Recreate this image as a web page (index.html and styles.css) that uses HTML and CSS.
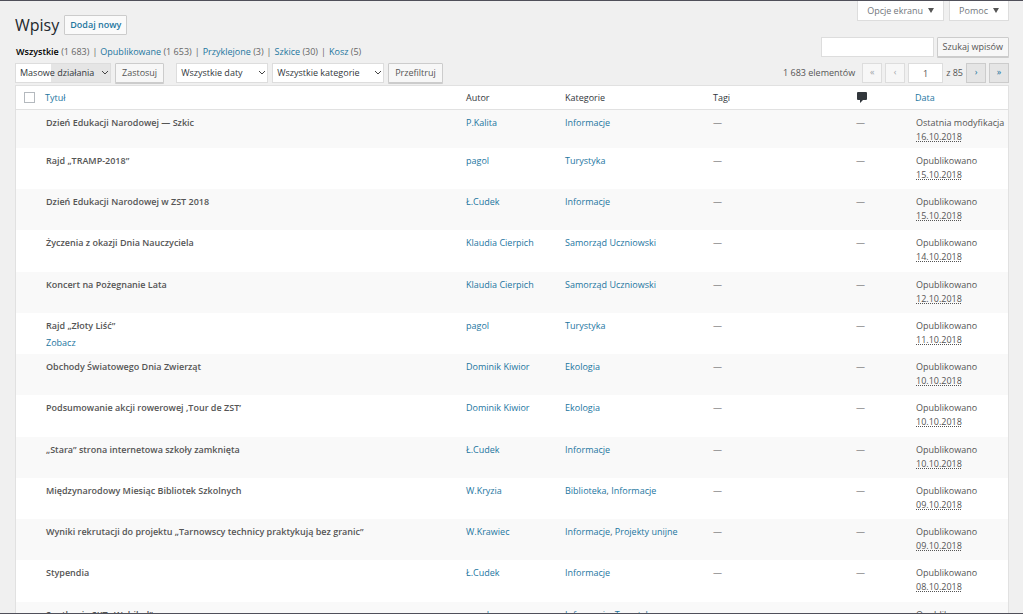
FILE: index.html
```html
<!DOCTYPE html>
<html lang="pl">
<head>
<meta charset="utf-8">
<meta name="viewport" content="width=device-width, initial-scale=1">
<title>Wpisy</title>
<link rel="stylesheet" href="styles.css">
</head>
<body>
<div class="screen">
  <header class="top">
    <h1 class="title">Wpisy</h1>
    <a class="add-new" href="#">Dodaj nowy</a>
    <div class="screen-tabs">
      <button class="screen-tab" type="button">Opcje ekranu <svg class="arrow" viewBox="0 0 6 5"><path d="M0 0h6L3 5z"/></svg></button>
      <button class="screen-tab" type="button">Pomoc <svg class="arrow" viewBox="0 0 6 5"><path d="M0 0h6L3 5z"/></svg></button>
    </div>
  </header>
  <div class="subhead">
    <ul class="views">
      <li><a class="current" href="#">Wszystkie</a> (1 683)</li>
      <li><a href="#">Opublikowane</a> (1 653)</li>
      <li><a href="#">Przyklejone</a> (3)</li>
      <li><a href="#">Szkice</a> (30)</li>
      <li><a href="#">Kosz</a> (5)</li>
    </ul>
    <form class="search">
      <input class="field search-field" type="search" aria-label="Szukaj wpisów">
      <button class="button search-button" type="button">Szukaj wpisów</button>
    </form>
  </div>
  <div class="tablenav">
    <div class="select select-bulk">
      <select aria-label="Masowe działania"><option>Masowe działania</option></select>
      <svg class="chevron" viewBox="0 0 8 6"><path d="M1 1l3 3 3-3"/></svg>
    </div>
    <button class="button apply" type="button">Zastosuj</button>
    <div class="select select-date">
      <select aria-label="Data"><option>Wszystkie daty</option></select>
      <svg class="chevron" viewBox="0 0 8 6"><path d="M1 1l3 3 3-3"/></svg>
    </div>
    <div class="select select-category">
      <select aria-label="Kategoria"><option>Wszystkie kategorie</option></select>
      <svg class="chevron" viewBox="0 0 8 6"><path d="M1 1l3 3 3-3"/></svg>
    </div>
    <button class="button" type="button">Przefiltruj</button>
    <nav class="pages" aria-label="Strony">
      <span class="count">1 683 elementów</span>
      <button class="page-button" type="button" disabled>«</button>
      <button class="page-button" type="button" disabled>‹</button>
      <input class="field page-field" type="text" value="1" aria-label="Bieżąca strona">
      <span>z 85</span>
      <button class="page-button" type="button">›</button>
      <button class="page-button" type="button">»</button>
    </nav>
  </div>
  <table class="posts">
    <thead>
      <tr>
        <th class="col-check"><input class="check" type="checkbox" aria-label="Zaznacz wszystko"></th>
        <th class="col-title"><a href="#">Tytuł</a></th>
        <th class="col-author">Autor</th>
        <th class="col-category">Kategorie</th>
        <th class="col-tags">Tagi</th>
        <th class="col-comments"><svg class="bubble" viewBox="0 0 10 11" role="img" aria-label="Komentarze"><path d="M1 0h8Q10 0 10 1v6Q10 8 9 8H6L3 11V8H1Q0 8 0 7V1Q0 0 1 0z"/></svg></th>
        <th class="col-date"><a href="#">Data</a></th>
      </tr>
    </thead>
    <tbody>
      <tr class="draft"><td></td><td class="post">Dzień Edukacji Narodowej — Szkic</td><td><a href="#">P.Kalita</a></td><td><a href="#">Informacje</a></td><td>—</td><td>—</td><td class="date">Ostatnia modyfikacja<br><abbr>16.10.2018</abbr></td></tr>
      <tr><td></td><td class="post">Rajd „TRAMP-2018”</td><td><a href="#">pagol</a></td><td><a href="#">Turystyka</a></td><td>—</td><td>—</td><td class="date">Opublikowano<br><abbr>15.10.2018</abbr></td></tr>
      <tr><td></td><td class="post">Dzień Edukacji Narodowej w ZST 2018</td><td><a href="#">Ł.Cudek</a></td><td><a href="#">Informacje</a></td><td>—</td><td>—</td><td class="date">Opublikowano<br><abbr>15.10.2018</abbr></td></tr>
      <tr><td></td><td class="post">Życzenia z okazji Dnia Nauczyciela</td><td><a href="#">Klaudia Cierpich</a></td><td><a href="#">Samorząd Uczniowski</a></td><td>—</td><td>—</td><td class="date">Opublikowano<br><abbr>14.10.2018</abbr></td></tr>
      <tr><td></td><td class="post">Koncert na Pożegnanie Lata</td><td><a href="#">Klaudia Cierpich</a></td><td><a href="#">Samorząd Uczniowski</a></td><td>—</td><td>—</td><td class="date">Opublikowano<br><abbr>12.10.2018</abbr></td></tr>
      <tr><td></td><td class="post">Rajd „Złoty Liść”<a class="row-action" href="#">Zobacz</a></td><td><a href="#">pagol</a></td><td><a href="#">Turystyka</a></td><td>—</td><td>—</td><td class="date">Opublikowano<br><abbr>11.10.2018</abbr></td></tr>
      <tr><td></td><td class="post">Obchody Światowego Dnia Zwierząt</td><td><a href="#">Dominik Kiwior</a></td><td><a href="#">Ekologia</a></td><td>—</td><td>—</td><td class="date">Opublikowano<br><abbr>10.10.2018</abbr></td></tr>
      <tr><td></td><td class="post">Podsumowanie akcji rowerowej ‚Tour de ZST’</td><td><a href="#">Dominik Kiwior</a></td><td><a href="#">Ekologia</a></td><td>—</td><td>—</td><td class="date">Opublikowano<br><abbr>10.10.2018</abbr></td></tr>
      <tr><td></td><td class="post">„Stara” strona internetowa szkoły zamknięta</td><td><a href="#">Ł.Cudek</a></td><td><a href="#">Informacje</a></td><td>—</td><td>—</td><td class="date">Opublikowano<br><abbr>10.10.2018</abbr></td></tr>
      <tr><td></td><td class="post">Międzynarodowy Miesiąc Bibliotek Szkolnych</td><td><a href="#">W.Kryzia</a></td><td><a href="#">Biblioteka</a>, <a href="#">Informacje</a></td><td>—</td><td>—</td><td class="date">Opublikowano<br><abbr>09.10.2018</abbr></td></tr>
      <tr><td></td><td class="post">Wyniki rekrutacji do projektu „Tarnowscy technicy praktykują bez granic”</td><td><a href="#">W.Krawiec</a></td><td><a href="#">Informacje</a>, <a href="#">Projekty unijne</a></td><td>—</td><td>—</td><td class="date">Opublikowano<br><abbr>09.10.2018</abbr></td></tr>
      <tr><td></td><td class="post">Stypendia</td><td><a href="#">Ł.Cudek</a></td><td><a href="#">Informacje</a></td><td>—</td><td>—</td><td class="date">Opublikowano<br><abbr>08.10.2018</abbr></td></tr>
      <tr><td></td><td class="post">Spotkanie SKT „Wehikuł”</td><td><a href="#">pagol</a></td><td><a href="#">Informacje</a>, <a href="#">Turystyka</a></td><td>—</td><td>—</td><td class="date">Opublikowano<br><abbr>08.10.2018</abbr></td></tr>
    </tbody>
  </table>
</div>
</body>
</html>
```
FILE: styles.css
```css
* { box-sizing: border-box; }

body {
  margin: 0;
  background: #f0f0f0;
  color: #555;
  font: 9px/14px "Open Sans", "Noto Sans", sans-serif;
}

a { color: #23769f; text-decoration: none; }

button, input, select { font: inherit; color: inherit; margin: 0; }

.screen {
  height: 100vh;
  overflow: hidden;
  padding: 0 14px 0 15px;
  border-top: 1px solid #50505a;
  border-bottom: 1px solid #50505a;
}

/* Page heading and screen tabs */
.top { display: flex; align-items: flex-start; height: 36px; }

.title {
  margin: 0;
  padding-top: 14px;
  color: #23282d;
  font-size: 16px;
  font-weight: 400;
  line-height: 20px;
}

.add-new {
  margin: 14px 0 0 5px;
  padding: 0 5px;
  border: 1px solid #ccc;
  border-radius: 1px;
  background: #fafafa;
  font-weight: 600;
  line-height: 18px;
}

.screen-tabs { display: flex; gap: 5px; margin-left: auto; }

.screen-tab {
  display: flex;
  align-items: center;
  gap: 5px;
  height: 20px;
  padding: 0 9px;
  border: 1px solid #ddd;
  border-top: 0;
  background: #fff;
  color: #72777c;
}

.arrow { width: 6px; height: 5px; fill: #555; }

/* Status filters and search */
.subhead { display: flex; justify-content: space-between; align-items: flex-end; }

.views {
  display: flex;
  margin: 0;
  padding: 0 0 0 1px;
  list-style: none;
  color: #666;
  line-height: 10px;
}

.views li + li::before { content: "|"; margin: 0 3px; }

.current { color: #000; font-weight: 600; }

.search { display: flex; gap: 3px; }

.field { height: 20px; border: 1px solid #ddd; background: #fff; }

.search-field { width: 113px; }

.button {
  height: 20px;
  padding: 0 6px;
  border: 1px solid #ccc;
  border-radius: 1px;
  background: #f7f7f7;
  box-shadow: 0 1px 0 #ccc;
  line-height: 18px;
}

.search-button { padding: 0 5px; }

/* Bulk actions, filters and paging */
.tablenav { display: flex; align-items: center; margin: 6px 0 2px; }

.apply { margin-right: 12px; }

.select { position: relative; margin-right: 4px; }

.select select {
  display: block;
  width: 100%;
  height: 20px;
  padding: 0 4px;
  border: 1px solid #ddd;
  border-radius: 0;
  appearance: none;
  background: #fff;
  color: #32373c;
}

.select-bulk { width: 96px; }
.select-bulk select { background: linear-gradient(to right, #fff 35px, #e5e5e5 35px); }
.select-date { width: 92px; }
.select-category { width: 112px; }

.chevron {
  position: absolute;
  top: 7px;
  right: 2px;
  width: 8px;
  height: 6px;
  fill: none;
  stroke: #444;
  pointer-events: none;
}

.pages { display: flex; align-items: center; gap: 3px; margin-left: auto; }

.count { margin-right: 4px; }

.page-field { width: 35px; padding: 0; text-align: center; }

.page-button {
  width: 20px;
  height: 20px;
  padding: 0 0 2px;
  border: 1px solid #ccc;
  background: #e5e5e5;
  color: #23769f;
}

.page-button:disabled { border-color: #ddd; background: #f7f7f7; color: #a0a5aa; }

/* Posts */
.posts {
  width: 100%;
  border: 1px solid #e1e1e1;
  border-spacing: 0;
  table-layout: fixed;
  background: #fff;
}

.posts th {
  height: 24px;
  padding: 0;
  border-bottom: 1px solid #e1e1e1;
  color: #32373c;
  font-weight: 400;
  text-align: left;
  vertical-align: middle;
}

.posts td { padding: 6px 0 4px; vertical-align: top; }

.posts tbody tr { height: 41px; }
.posts tbody tr.draft { height: 38px; }
.posts tbody tr:nth-child(4n) { height: 42px; }
.posts tbody tr:nth-child(odd) { background: #f9f9f9; }

.col-check { width: 29px; }
.col-author { width: 99px; }
.col-category { width: 148px; }
.col-tags { width: 143px; }
.col-comments { width: 59px; }
.col-date { width: 93px; }

.check {
  display: block;
  width: 11px;
  height: 11px;
  margin-left: 8px;
  border: 1px solid #b4b9be;
  appearance: none;
  background: #fff;
}

.bubble { display: block; width: 10px; height: 11px; margin-left: 1px; fill: #32373c; }

.posts td.post { padding-left: 1px; font-weight: 600; }

.row-action { display: block; margin-top: 3px; font-weight: 400; }

.posts td.date { padding-left: 1px; white-space: nowrap; }

.date abbr { text-decoration: underline dotted; }
```
